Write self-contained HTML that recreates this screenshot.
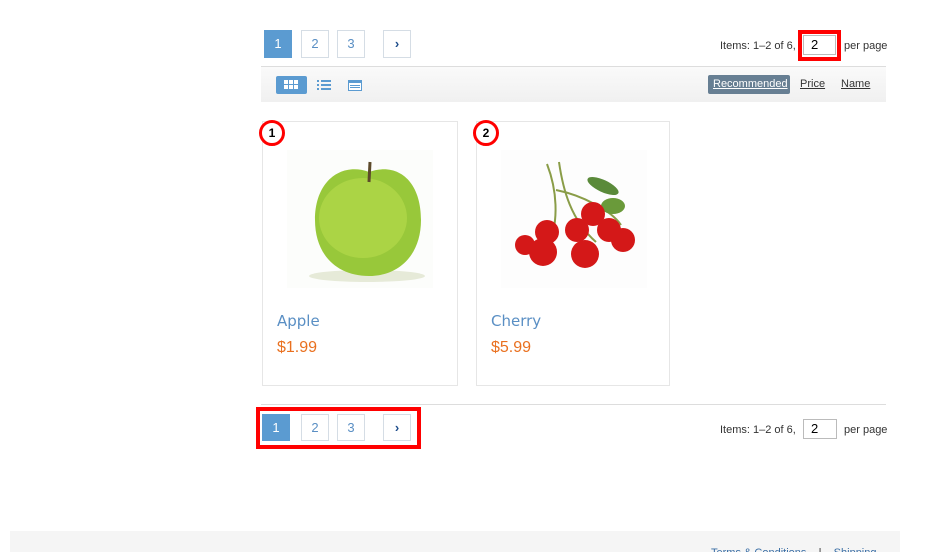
<!DOCTYPE html>
<html style="overflow:hidden"><head><style>
*{box-sizing:border-box;margin:0;padding:0}
html,body{width:950px;height:552px;overflow:hidden}
body{background:#fff;font-family:"Liberation Sans",sans-serif;position:relative}
.a{position:absolute}
.pg{position:absolute;width:28px;height:28px;border:1px solid #d5dde5;color:#5a8fc4;font-size:13px;text-align:center;line-height:26px;background:#fff}
.pg.on{background:#5b9bd1;color:#fff;border-color:#5b9bd1}
.info{position:absolute;font-size:11px;color:#333;}
.inp{position:absolute;width:34px;height:20px;border:1px solid #bbb;font-size:13px;padding-left:7px;line-height:18px;color:#000;background:#fff}
.card{position:absolute;border:1px solid #e6e6e6;background:#fff}
.nm{position:absolute;left:14px;top:190px;color:#5a8fc4;font-size:15px;font-family:"DejaVu Sans",sans-serif}
.pr{position:absolute;left:14px;top:217px;color:#e9701f;font-size:16px}
.badge{position:absolute;width:26px;height:26px;border:3px solid #f00;border-radius:50%;background:#fff;font-weight:bold;font-size:12px;text-align:center;line-height:20px;color:#000}
.srt{position:absolute;top:75px;height:19px;line-height:19px;font-size:11px;color:#333;text-decoration:underline}
</style></head><body>
<div class="pg on" style="left:264px;top:30px">1</div>
<div class="pg" style="left:301px;top:30px">2</div>
<div class="pg" style="left:337px;top:30px">3</div>
<div class="pg" style="left:383px;top:30px;color:#1f4e8c;font-weight:bold">›</div>
<div class="info" style="left:720px;top:40px">Items: 1–2 of 6,</div>
<div class="a" style="left:798px;top:30px;width:43px;height:31px;border:4px solid #f00"></div>
<div class="inp" style="left:803px;top:35px;width:33px">2</div>
<div class="info" style="left:844px;top:40px">per page</div>
<div class="a" style="left:261px;top:66px;width:625px;height:36px;background:linear-gradient(#fafafa,#f0f0f0);border-top:1px solid #ddd"></div>
<div class="a" style="left:276px;top:76px;width:31px;height:18px;background:#5b9bd1;border-radius:2px"></div>
<svg class="a" style="left:284px;top:80px" width="15" height="10"><g fill="#fff"><rect x="0" y="0" width="4" height="4"/><rect x="5" y="0" width="4" height="4"/><rect x="10" y="0" width="4" height="4"/><rect x="0" y="5" width="4" height="4"/><rect x="5" y="5" width="4" height="4"/><rect x="10" y="5" width="4" height="4"/></g></svg>
<svg class="a" style="left:317px;top:80px" width="15" height="11"><g fill="#5b9bd1"><rect x="0" y="0" width="2" height="2"/><rect x="4" y="0" width="10" height="2"/><rect x="0" y="4" width="2" height="2"/><rect x="4" y="4" width="10" height="2"/><rect x="0" y="8" width="2" height="2"/><rect x="4" y="8" width="10" height="2"/></g></svg>
<svg class="a" style="left:348px;top:80px" width="15" height="11"><rect x="0.5" y="0.5" width="13" height="10" fill="#fff" stroke="#5b9bd1"/><rect x="0" y="0" width="14" height="3" fill="#5b9bd1"/><g fill="#5b9bd1"><rect x="2" y="5" width="10" height="1"/><rect x="2" y="7" width="10" height="1"/></g></svg>
<div class="a" style="left:708px;top:75px;width:82px;height:19px;background:#677f93;border-radius:2px"></div>
<div class="srt" style="left:713px;color:#fff">Recommended</div>
<div class="srt" style="left:800px">Price</div>
<div class="srt" style="left:841px">Name</div>
<div class="card" style="left:262px;top:121px;width:196px;height:265px">
<svg class="a" style="left:24px;top:28px" width="146" height="138">
<rect width="146" height="138" fill="#fcfdfb"/>
<ellipse cx="80" cy="126" rx="58" ry="6" fill="#e6ead8"/>
<path d="M28 70 C28 30 55 12 82 22 C110 12 134 30 134 70 C134 105 112 126 82 126 C50 126 28 105 28 70Z" fill="#98c83a"/>
<ellipse cx="76" cy="68" rx="44" ry="40" fill="#b3d84a" opacity="0.7"/>
<path d="M82 32 L83 12" stroke="#5c4a2a" stroke-width="3"/>
</svg>
<div class="nm">Apple</div><div class="pr">$1.99</div>
</div>
<div class="badge" style="left:259px;top:120px">1</div>
<div class="card" style="left:476px;top:121px;width:194px;height:265px">
<svg class="a" style="left:24px;top:28px" width="146" height="138">
<rect width="146" height="138" fill="#fdfdfd"/>
<g stroke="#8a9d48" stroke-width="2" fill="none"><path d="M46 14 C56 40 58 70 48 95"/><path d="M58 12 C62 40 70 70 95 92"/><path d="M55 40 C80 45 110 60 120 75"/></g>
<ellipse cx="102" cy="36" rx="17" ry="6" fill="#5a8a3a" transform="rotate(25 102 36)"/>
<ellipse cx="112" cy="56" rx="12" ry="8" fill="#6a9a3a"/>
<g fill="#d41818"><circle cx="24" cy="95" r="10"/><circle cx="46" cy="82" r="12"/><circle cx="92" cy="64" r="12"/><circle cx="122" cy="90" r="12"/><circle cx="76" cy="80" r="12"/><circle cx="108" cy="80" r="12"/><circle cx="42" cy="102" r="14"/><circle cx="84" cy="104" r="14"/></g>
</svg>
<div class="nm">Cherry</div><div class="pr">$5.99</div>
</div>
<div class="badge" style="left:473px;top:120px">2</div>
<div class="a" style="left:261px;top:404px;width:625px;height:1px;background:#ddd"></div>
<div class="a" style="left:256px;top:407px;width:165px;height:42px;border:4px solid #f00"></div>
<div class="pg on" style="left:262px;top:414px;width:28px;height:27px">1</div>
<div class="pg" style="left:301px;top:414px;height:27px">2</div>
<div class="pg" style="left:337px;top:414px;height:27px">3</div>
<div class="pg" style="left:383px;top:414px;height:27px;color:#1f4e8c;font-weight:bold">›</div>
<div class="info" style="left:720px;top:424px">Items: 1–2 of 6,</div>
<div class="inp" style="left:803px;top:419px">2</div>
<div class="info" style="left:844px;top:424px">per page</div>
<div class="a" style="left:10px;top:531px;width:890px;height:21px;background:#f5f5f5"></div>
<div class="a" style="left:711px;top:547px;font-size:11px;color:#3a6ea5;white-space:nowrap">Terms &amp; Conditions &nbsp; &nbsp;<span style="color:#333">|</span>&nbsp; &nbsp; Shipping</div>
</body></html>
